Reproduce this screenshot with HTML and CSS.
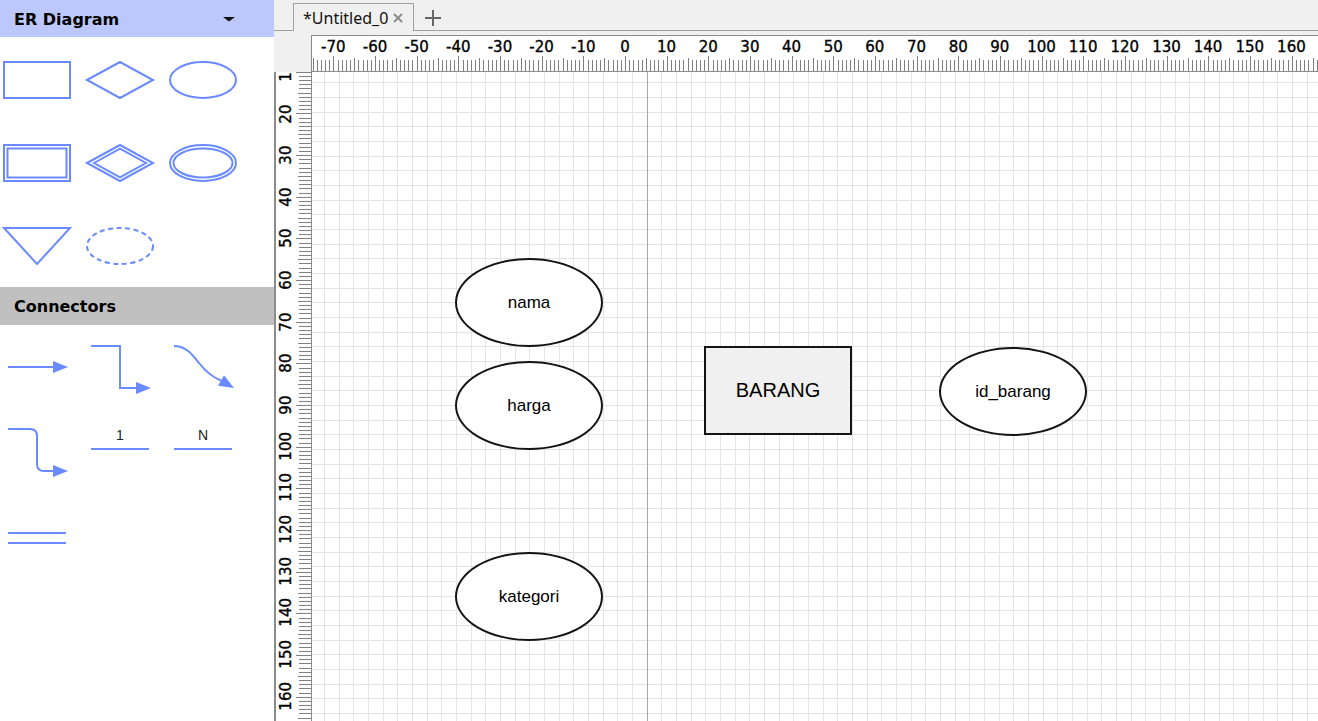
FILE: index.html
```html
<!DOCTYPE html>
<html>
<head>
<meta charset="utf-8">
<title>ER Diagram</title>
<link rel="stylesheet" href="styles.css">
</head>
<body>
<div class="app">
  <aside class="sidebar">
    <div class="section-head er-head">
      <span>ER Diagram</span>
      <svg class="caret" width="12" height="5" viewBox="0 0 12 5"><polygon points="0,0 12,0 6,4.5"/></svg>
    </div>
    <div class="palette">
      <svg class="shape" viewBox="0 0 68 38"><rect x="1" y="1" width="66" height="36"/></svg>
      <svg class="shape" viewBox="0 0 68 38"><polygon points="1,19 34,1 67,19 34,37"/></svg>
      <svg class="shape" viewBox="0 0 68 38"><ellipse cx="34" cy="19" rx="33" ry="18"/></svg>
      <svg class="shape" viewBox="0 0 68 38"><rect x="1" y="1" width="66" height="36"/><rect x="4.5" y="4.5" width="59" height="29"/></svg>
      <svg class="shape" viewBox="0 0 68 38"><polygon points="1,19 34,1 67,19 34,37"/><polygon points="8,19 34,4.6 60,19 34,33.4"/></svg>
      <svg class="shape" viewBox="0 0 68 38"><ellipse cx="34" cy="19" rx="33" ry="18"/><ellipse cx="34" cy="19" rx="29.5" ry="14.5"/></svg>
      <svg class="shape" viewBox="0 0 68 38"><polygon points="1,1 67,1 34,37"/></svg>
      <svg class="shape dashed" viewBox="0 0 68 38"><ellipse cx="34" cy="19" rx="33" ry="18"/></svg>
    </div>
    <div class="section-head conn-head"><span>Connectors</span></div>
    <div class="connectors">
      <svg class="conn" viewBox="0 0 60 50"><line x1="0" y1="23" x2="47" y2="23"/><polygon class="head" points="45,17 60,23 45,29"/></svg>
      <svg class="conn" viewBox="0 0 60 50"><path d="M0,2 H29 V44 H47"/><polygon class="head" points="45,38 60,44 45,50"/></svg>
      <svg class="conn" viewBox="0 0 60 50"><path d="M0,2 C12,2 18,10 25,19 C32,28 38,33 47,36.5"/><polygon class="head" points="60,44 44,41.7 50,31.3"/></svg>
      <svg class="conn" viewBox="0 0 60 50"><path d="M0,2 H22 Q29,2 29,9 V37 Q29,44 36,44 H47"/><polygon class="head" points="45,38 60,44 45,50"/></svg>
      <div class="card-label">1</div>
      <div class="card-label">N</div>
      <svg class="conn" viewBox="0 0 60 50"><line x1="0" y1="23" x2="58" y2="23"/><line x1="0" y1="33" x2="58" y2="33"/></svg>
    </div>
  </aside>

  <main class="main">
    <div class="tabbar">
      <div class="tab">
        <span class="tab-title">*Untitled_0</span>
        <svg class="close" viewBox="0 0 10 10"><line x1="1" y1="1" x2="9" y2="9"/><line x1="9" y1="1" x2="1" y2="9"/></svg>
      </div>
      <svg class="plus" viewBox="0 0 18 18"><line x1="9" y1="1" x2="9" y2="17"/><line x1="1" y1="9" x2="17" y2="9"/></svg>
    </div>

    <div class="workspace">
      <div class="corner"></div>
      <div class="hruler">
        <div class="hlabels">
          <span>-70</span><span>-60</span><span>-50</span><span>-40</span><span>-30</span><span>-20</span><span>-10</span><span>0</span><span>10</span><span>20</span><span>30</span><span>40</span><span>50</span><span>60</span><span>70</span><span>80</span><span>90</span><span>100</span><span>110</span><span>120</span><span>130</span><span>140</span><span>150</span><span>160</span><span>170</span>
        </div>
        <svg id="hticks" class="hticks"></svg>
      </div>
      <div class="vruler">
        <div class="vlabels">
          <span>10</span><span>20</span><span>30</span><span>40</span><span>50</span><span>60</span><span>70</span><span>80</span><span>90</span><span>100</span><span>110</span><span>120</span><span>130</span><span>140</span><span>150</span><span>160</span><span>170</span>
        </div>
        <svg id="vticks" class="vticks"></svg>
      </div>
      <div class="canvas">
        <svg id="grid" class="grid"></svg>
        <div class="node attr n-nama">nama</div>
        <div class="node attr n-harga">harga</div>
        <div class="node attr n-kategori">kategori</div>
        <div class="node entity n-barang">BARANG</div>
        <div class="node attr n-id">id_barang</div>
      </div>
    </div>
  </main>
</div>
<script src="script.js"></script>
</body>
</html>
```

FILE: styles.css
```css
* { box-sizing: border-box; }
html, body { margin: 0; padding: 0; }
body {
  width: 1318px;
  height: 721px;
  overflow: hidden;
  background: #fff;
  font-family: "DejaVu Sans", sans-serif;
}
.app { display: flex; height: 721px; }

/* ---------- sidebar ---------- */
.sidebar {
  width: 274px;
  flex: none;
  background: #fff;
  display: flex;
  flex-direction: column;
}
.section-head {
  height: 37px;
  flex: none;
  display: flex;
  align-items: center;
  justify-content: space-between;
  padding: 1px 39px 0 14px;
  font: bold 16px "DejaVu Sans", sans-serif;
  color: #000;
}
.er-head { background: #bcc8fc; }
.conn-head { background: #c0c0c0; height: 38px; }
.caret { fill: #111; margin-top: 1px; }

.palette {
  display: grid;
  grid-template-columns: repeat(3, 68px);
  grid-auto-rows: 38px;
  column-gap: 15px;
  row-gap: 45px;
  padding: 24px 0 22px 3px;
}
.shape {
  display: block;
  width: 68px;
  height: 38px;
  overflow: visible;
  fill: none;
  stroke: #6a8bff;
  stroke-width: 2;
}
.dashed { stroke-dasharray: 5 3.5; }

.connectors {
  display: grid;
  grid-template-columns: repeat(3, 60px);
  grid-auto-rows: 50px;
  column-gap: 23px;
  row-gap: 33px;
  padding: 19px 0 0 8px;
}
.conn {
  display: block;
  width: 60px;
  height: 50px;
  overflow: visible;
  fill: none;
  stroke: #6a8bff;
  stroke-width: 2;
}
.conn .head { fill: #6a8bff; stroke: none; }
.card-label {
  width: 58px;
  height: 23.3px;
  border-bottom: 2px solid #6a8bff;
  text-align: center;
  font: 14px/16px "Liberation Sans", Arial, sans-serif;
  color: #222;
}

/* ---------- main ---------- */
.main {
  flex: 1;
  min-width: 0;
  display: flex;
  flex-direction: column;
}
.tabbar {
  height: 31px;
  flex: none;
  display: flex;
  align-items: flex-end;
  background: #f0f0f0;
  border-bottom: 1px solid #a0a0a0;
  padding-left: 19px;
}
.tab {
  width: 121px;
  height: 28px;
  margin-bottom: -1px;
  background: #f0f0f0;
  border: 1px solid #a0a0a0;
  border-bottom: none;
  display: flex;
  align-items: center;
  padding: 0 10px 0 9px;
}
.tab-title {
  font: 16px "Noto Sans", sans-serif;
  color: #111;
  white-space: nowrap;
}
.close {
  margin-left: auto;
  width: 10px;
  height: 10px;
  flex: none;
  stroke: #8c8c8c;
  stroke-width: 2;
}
.plus {
  align-self: flex-start;
  margin: 9px 0 0 10px;
  width: 18px;
  height: 18px;
  stroke: #666;
  stroke-width: 2;
}

.workspace {
  flex: 1;
  min-height: 0;
  display: grid;
  grid-template-columns: 38px 1fr;
  grid-template-rows: 41px 1fr;
  background: #f0f0f0;
}
.corner { background: #f0f0f0; }

.hruler {
  margin: 4px 0 0 -1px;
  height: 37px;
  border: 1px solid #8c8c8c;
  border-right: none;
  background: #fff;
  display: flex;
  flex-direction: column;
  overflow: hidden;
}
.hlabels {
  height: 20px;
  flex: none;
  display: flex;
  padding: 2px 0 0 0.5px;
  white-space: nowrap;
}
.hlabels span {
  flex: none;
  width: 41.6667px;
  text-align: center;
  font: 15px/18px "DejaVu Sans", sans-serif;
  color: #000;
  -webkit-text-stroke: 0.35px #000;
}
.hticks {
  display: block;
  flex: none;
  width: 100%;
  height: 15px;
}
.hticks rect, .vticks rect { fill: #808080; shape-rendering: crispEdges; }

.vruler {
  border-left: 2px solid #8c8c8c;
  border-right: 1px solid #8c8c8c;
  background: #fff;
  display: flex;
  overflow: hidden;
  min-height: 0;
}
.vlabels {
  width: 20px;
  flex: none;
  display: flex;
  flex-direction: column;
  margin-top: -21.1667px;
}
.vlabels span {
  flex: none;
  width: 20px;
  height: 41.6667px;
  writing-mode: vertical-rl;
  transform: rotate(180deg);
  text-align: center;
  font: 15px/20px "DejaVu Sans", sans-serif;
  color: #000;
  -webkit-text-stroke: 0.35px #000;
}
.vticks {
  display: block;
  flex: none;
  width: 15px;
  height: 100%;
}

.canvas {
  position: relative;
  overflow: hidden;
  background: #fff;
}
.grid {
  position: absolute;
  left: 0;
  top: 0;
  width: 100%;
  height: 100%;
}
.grid rect { fill: #e4e4e4; shape-rendering: crispEdges; }
.grid rect.axis { fill: #a8a8a8; }

.node {
  position: absolute;
  width: 148px;
  height: 89px;
  border: 2px solid #141414;
  display: flex;
  align-items: center;
  justify-content: center;
  font: 17px "Liberation Sans", Arial, sans-serif;
  color: #000;
}
.attr { border-radius: 50%; background: #fff; }
.entity { background: #f0f0f0; font-size: 20px; }
.n-nama { left: 143px; top: 186px; }
.n-harga { left: 143px; top: 289px; }
.n-kategori { left: 143px; top: 480px; }
.n-barang { left: 392px; top: 274px; }
.n-id { left: 627px; top: 275px; }
```

FILE: script.js
```js
(function () {
  var NS = 'http://www.w3.org/2000/svg';
  var U = 25 / 6;
  var S = 44 / 3;
  function add(svg, x, y, w, h, cls) {
    var r = document.createElementNS(NS, 'rect');
    r.setAttribute('x', x);
    r.setAttribute('y', y);
    r.setAttribute('width', w);
    r.setAttribute('height', h);
    if (cls) r.setAttribute('class', cls);
    svg.appendChild(r);
  }
  function len(k, a, b, c) {
    var m = ((k % 10) + 10) % 10;
    return m === 0 ? a : (m === 5 ? b : c);
  }
  var ht = document.getElementById('hticks');
  for (var k = -80; k <= 250; k++) {
    var x = Math.round(313 + k * U);
    if (x < 0 || x > 1010) continue;
    var h = len(k, 15, 13, 11);
    add(ht, x, 15 - h, 1, h);
  }
  var vt = document.getElementById('vticks');
  for (var k2 = 0; k2 <= 200; k2++) {
    var y = Math.round(-42 + k2 * U);
    if (y < 0 || y > 660) continue;
    var w = len(k2, 15, 13, 12);
    add(vt, 15 - w, y, w, 1);
  }
  var g = document.getElementById('grid');
  for (var i = -30; i <= 60; i++) {
    var gx = Math.round(334.7 + i * S);
    if (gx < 0 || gx > 1010) continue;
    add(g, gx, 0, 1, 660);
  }
  for (var j = -5; j <= 50; j++) {
    var gy = Math.round(10.3 + j * S);
    if (gy < 0 || gy > 660) continue;
    add(g, 0, gy, 1010, 1);
  }
  add(g, 335, 0, 1, 660, 'axis');
})();
```
